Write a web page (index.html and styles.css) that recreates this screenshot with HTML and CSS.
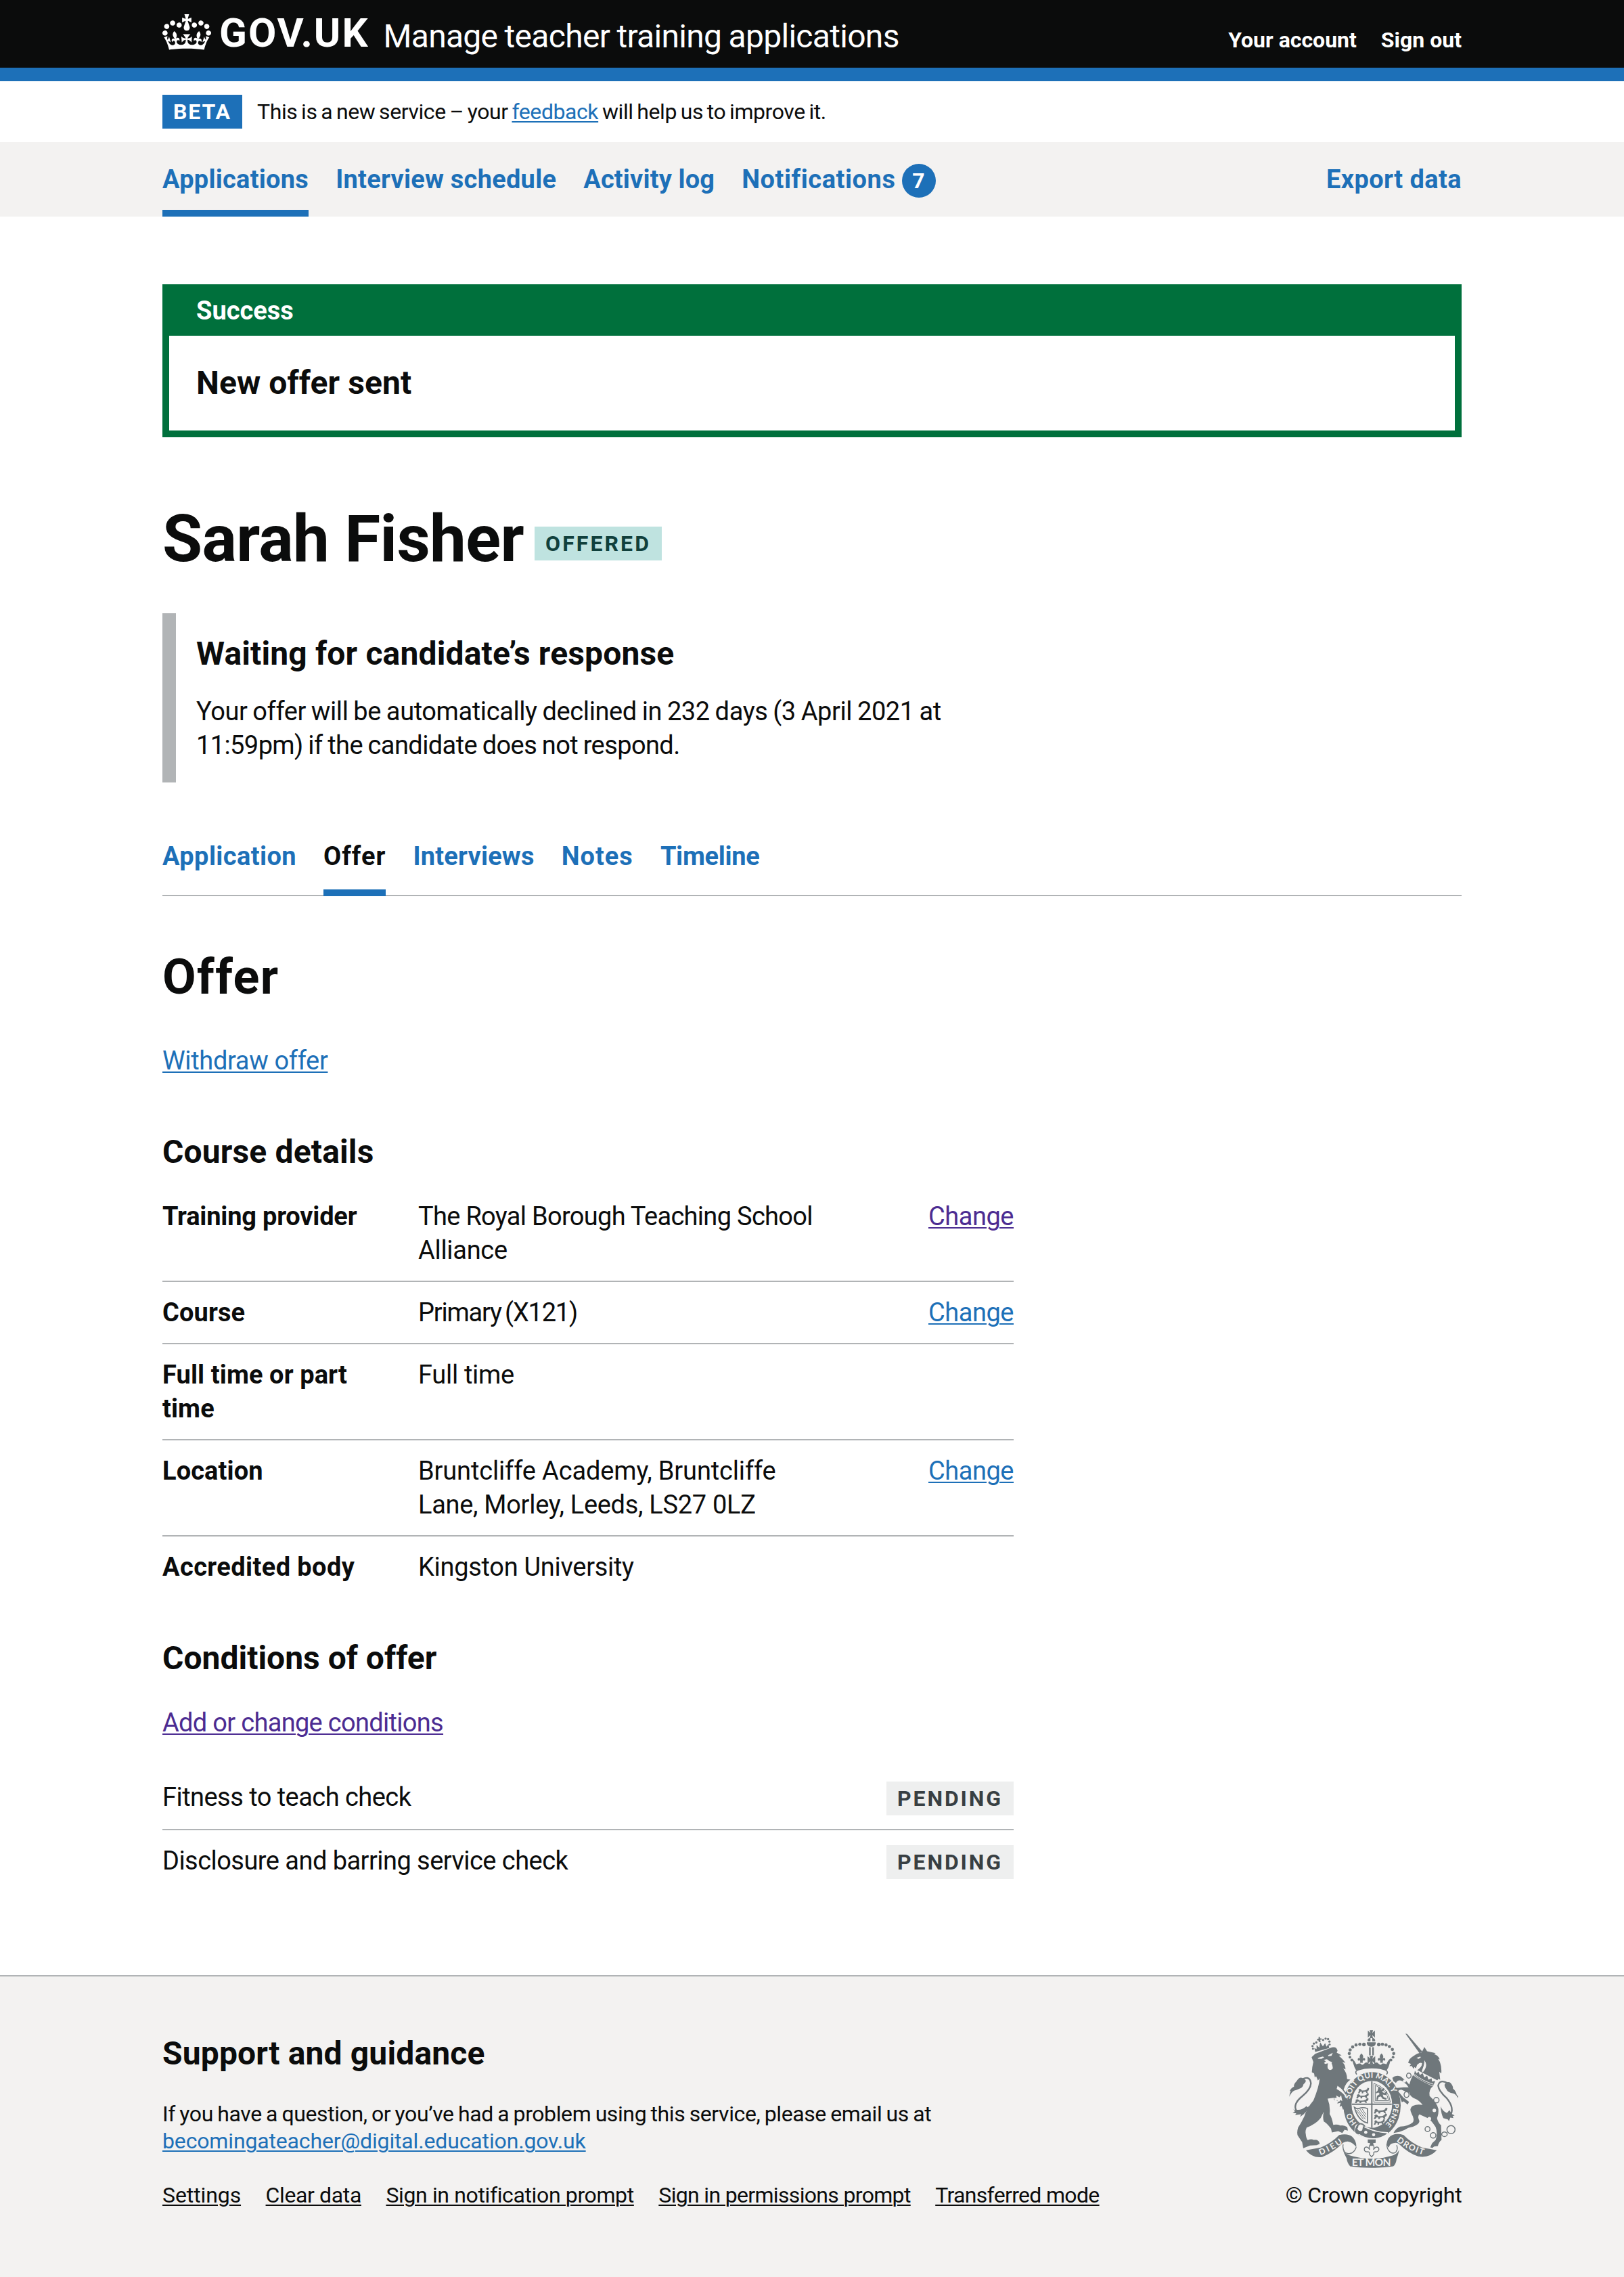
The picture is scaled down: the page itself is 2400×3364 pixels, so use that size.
FILE: index.html
```html
<!DOCTYPE html>
<html lang="en">
<head>
<meta charset="utf-8">
<title>Sarah Fisher - Manage teacher training applications - GOV.UK</title>
<link rel="stylesheet" href="styles.css">
</head>
<body>
<header class="header">
  <div class="container header-row">
    <a class="logo" href="#">
      <svg class="crown" viewBox="0 0 132 97" aria-hidden="true"><path fill="currentColor" fill-rule="evenodd" d="M25 30.2c3.5 1.5 7.7-.2 9.1-3.7 1.5-3.6-.2-7.8-3.9-9.2-3.6-1.4-7.6.3-9.1 3.9-1.4 3.5.3 7.5 3.9 9zM9 39.5c3.6 1.5 7.8-.2 9.2-3.7 1.5-3.6-.2-7.8-3.9-9.1-3.6-1.5-7.6.2-9.1 3.8-1.4 3.5.3 7.5 3.8 9zM4.4 57.2c3.5 1.5 7.7-.2 9.1-3.8 1.5-3.6-.2-7.7-3.9-9.1-3.5-1.5-7.6.3-9.1 3.8-1.4 3.5.3 7.6 3.9 9.1zm38.3-21.4c3.5 1.5 7.7-.2 9.1-3.8 1.5-3.6-.2-7.7-3.9-9.1-3.6-1.5-7.6.3-9.1 3.8-1.3 3.6.4 7.7 3.9 9.1zm64.4-5.6c-3.6 1.5-7.8-.2-9.1-3.7-1.5-3.6.2-7.8 3.8-9.2 3.6-1.4 7.7.3 9.2 3.9 1.3 3.5-.4 7.5-3.9 9zm15.9 9.3c-3.6 1.5-7.7-.2-9.1-3.7-1.5-3.6.2-7.8 3.7-9.1 3.6-1.5 7.7.2 9.2 3.8 1.5 3.5-.3 7.5-3.8 9zm4.7 17.7c-3.6 1.5-7.8-.2-9.2-3.8-1.5-3.6.2-7.7 3.9-9.1 3.6-1.5 7.7.3 9.2 3.8 1.3 3.5-.4 7.6-3.9 9.1zM89.3 35.8c-3.6 1.5-7.8-.2-9.2-3.8-1.4-3.6.2-7.7 3.9-9.1 3.6-1.5 7.7.3 9.2 3.8 1.4 3.6-.3 7.7-3.9 9.1zM69.7 17.7l8.9 4.7V9.3l-8.9 2.8c-.2-.3-.5-.6-.9-.9L72.4 0H59.6l3.5 11.2c-.3.3-.6.5-.9.9l-8.8-2.8v13.1l8.8-4.7c.3.3.6.7.9.9l-5 15.4v.1c-.2.8-.4 1.6-.4 2.4 0 4.1 3.1 7.5 7 8.1h.2c.3 0 .7.1 1 .1.4 0 .7 0 1-.1h.2c4-.6 7.1-4.1 7.1-8.1 0-.8-.1-1.7-.4-2.4V34l-5.1-15.4c.4-.2.7-.6 1-.9zM66 92.8c16.9 0 32.8 1.1 47.1 3.2 4-16.9 8.9-26.7 14-33.5l-9.6-3.4c1 4.9 1.1 7.2 0 10.2-1.5-1.4-3-4.3-4.2-8.7L108.6 76c2.8-2 5-3.2 7.5-3.3-4.4 9.4-10 11.9-13.6 11.2-4.3-.8-6.3-4.6-5.6-7.9 1-4.7 5.7-5.9 8-.5 4.3-8.7-3-11.4-7.6-8.8 7.1-7.2 7.9-13.5 2.1-21.1-8 6.1-8.1 12.3-4.5 20.8-4.7-5.4-12.1-2.5-9.5 6.2 3.4-5.2 7.9-2 7.2 3.1-.6 4.3-6.4 7.8-13.5 7.2-10.3-.9-10.9-8-11.2-13.8 2.5-.5 7.1 1.8 11 7.3L80.2 60c-4.1 4.4-8 5.3-12.3 5.4 1.4-4.4 8-11.6 8-11.6H55.5s6.4 7.2 7.9 11.6c-4.2-.1-8-1-12.3-5.4l1.4 16.4c3.9-5.5 8.5-7.7 10.9-7.3-.3 5.8-.9 12.8-11.1 13.8-7.2.6-12.9-2.9-13.5-7.2-.7-5 3.8-8.3 7.1-3.1 2.7-8.7-4.6-11.6-9.4-6.2 3.7-8.5 3.6-14.7-4.6-20.8-5.8 7.6-5 13.9 2.2 21.1-4.7-2.6-11.9.1-7.7 8.8 2.3-5.5 7.1-4.2 8.1.5.7 3.3-1.3 7.1-5.7 7.9-3.5.7-9-1.8-13.5-11.2 2.5.1 4.7 1.3 7.5 3.3l-4.7-15.4c-1.2 4.4-2.7 7.2-4.3 8.7-1.1-3-.9-5.3 0-10.2l-9.5 3.4c5 6.9 9.9 16.7 14 33.5 14.8-2.1 30.8-3.2 47.7-3.2z"/></svg>
      <span class="logotype">GOV.UK</span>
    </a>
    <a class="service-name" href="#">Manage teacher training applications</a>
    <nav class="account-nav"><a href="#">Your account</a><a href="#">Sign out</a></nav>
  </div>
</header>

<div class="container phase">
  <strong class="tag tag-beta">BETA</strong>
  <span class="phase-text">This is a new service – your <a class="link" href="#">feedback</a> will help us to improve it.</span>
</div>

<nav class="primary">
  <div class="container primary-row">
    <a class="primary-item current" href="#">Applications</a>
    <a class="primary-item" href="#">Interview schedule</a>
    <a class="primary-item" href="#">Activity log</a>
    <a class="primary-item" href="#">Notifications</a>
    <span class="count">7</span>
    <a class="primary-item export" href="#">Export data</a>
  </div>
</nav>

<main class="container main">
  <section class="banner">
    <h2 class="banner-title">Success</h2>
    <p class="banner-text">New offer sent</p>
  </section>

  <div class="title-row">
    <h1 class="title">Sarah Fisher</h1>
    <strong class="tag tag-offered">OFFERED</strong>
  </div>

  <section class="inset">
    <h2 class="heading-m">Waiting for candidate’s response</h2>
    <p class="inset-text"><span class="line line-a">Your offer will be automatically declined in 232 days (3 April 2021 at</span> <span class="line line-b">11:59pm) if the candidate does not respond.</span></p>
  </section>

  <nav class="tabs">
    <a class="tab" href="#">Application</a>
    <a class="tab selected" href="#">Offer</a>
    <a class="tab" href="#">Interviews</a>
    <a class="tab" href="#">Notes</a>
    <a class="tab" href="#">Timeline</a>
  </nav>

  <div class="two-thirds">
    <h2 class="heading-l">Offer</h2>
    <p class="withdraw"><a class="link" href="#">Withdraw offer</a></p>

    <h3 class="heading-m course-heading">Course details</h3>
    <dl class="summary">
      <div class="summary-row">
        <dt class="tight">Training provider</dt>
        <dd><span class="line school">The Royal Borough Teaching School</span> <span class="line">Alliance</span></dd>
        <dd class="action"><a class="link visited" href="#">Change</a></dd>
      </div>
      <div class="summary-row">
        <dt>Course</dt>
        <dd class="course-name">Primary (X121)</dd>
        <dd class="action"><a class="link" href="#">Change</a></dd>
      </div>
      <div class="summary-row">
        <dt>Full time or part time</dt>
        <dd>Full time</dd>
      </div>
      <div class="summary-row">
        <dt>Location</dt>
        <dd><span class="line academy">Bruntcliffe Academy, Bruntcliffe</span> <span class="line">Lane, Morley, Leeds, LS27 0LZ</span></dd>
        <dd class="action"><a class="link" href="#">Change</a></dd>
      </div>
      <div class="summary-row">
        <dt class="loose">Accredited body</dt>
        <dd>Kingston University</dd>
      </div>
    </dl>

    <h3 class="heading-m conditions-heading">Conditions of offer</h3>
    <p class="conditions-link"><a class="link visited" href="#">Add or change conditions</a></p>
    <ul class="conditions">
      <li><span>Fitness to teach check</span><strong class="tag tag-pending">PENDING</strong></li>
      <li><span>Disclosure and barring service check</span><strong class="tag tag-pending">PENDING</strong></li>
    </ul>
  </div>
</main>

<footer class="footer">
  <div class="container footer-row">
    <div class="support">
      <h2 class="heading-m">Support and guidance</h2>
      <p class="support-text"><span class="line question">If you have a question, or you’ve had a problem using this service, please email us at</span> <a class="link email" href="#">becomingateacher@digital.education.gov.uk</a></p>
      <nav class="footer-links">
        <a href="#">Settings</a>
        <a href="#">Clear data</a>
        <a href="#">Sign in notification prompt</a>
        <a href="#">Sign in permissions prompt</a>
        <a href="#">Transferred mode</a>
      </nav>
    </div>
    <div class="copyright">
      <svg class="crest" viewBox="72 58 750 614" aria-hidden="true">
        <defs>
          <path id="garter-top" d="M342 380A97 110 0 0 1 536 380"/>
          <path id="garter-left" d="M382 479A97 110 0 0 1 342 388"/>
          <path id="garter-right" d="M535 384A97 110 0 0 1 492 482"/>
          <path id="scroll-left" d="M211 613Q268 592 318 552"/>
          <path id="scroll-right" d="M548 550Q600 594 676 613"/>
          <g id="lion-passant"><path d="M0 5l6-5 5 3 4 5 14-1 8-4 4-8 6 3-2 9-6 4 2 9-6-1-3-6-10 1-2 7-6-1 1-7-7 0-4 8-6-1 4-11z"/></g>
          <g id="fleur"><path d="M0-20c8 8 9 14 4 23 3-7 12-6 11 2-1 5-7 5-8 1-2 5-3 7-1 11H-6c2-4 1-6-1-11-1 4-7 4-8-1-1-8 8-9 11-2-5-9-4-15 4-23z"/></g>
          <g id="cross"><path d="M-17-17Q-8-10-4-5L-8-19H8L4-5Q8-10 17-17V17Q10 9 4 5L8 19H-8L-4 5Q-10 9-17 17z"/></g>
        </defs>
        <g fill="currentColor">
          <!-- royal crown -->
          <use href="#cross" transform="translate(437 76) scale(.92)"/>
          <path d="M421 108q-4-14 12-15v15zM441 93q14 2 13 15h-13zM417 112h39v7q-4 13-19 13t-20-13zM427 134h7v36h-7zM441 134h7v36h-7z"/>
          <circle cx="404" cy="122" r="8"/><circle cx="386" cy="121" r="7"/><circle cx="369" cy="124" r="7"/><circle cx="354" cy="133" r="7"/><circle cx="343" cy="146" r="7"/><circle cx="339" cy="162" r="7"/><circle cx="342" cy="178" r="6"/><circle cx="350" cy="191" r="6"/>
          <circle cx="470" cy="122" r="8"/><circle cx="486" cy="121" r="7"/><circle cx="502" cy="124" r="7"/><circle cx="517" cy="131" r="7"/><circle cx="530" cy="144" r="7"/><circle cx="536" cy="162" r="7"/><circle cx="533" cy="178" r="6"/><circle cx="524" cy="191" r="6"/>
          <path d="M352 184q11 10 18 26 18-7 21-2 4 8 13 0 10-12 20-2 13 7 26 0 10-10 20 2 9 8 13 0 3-5 21 2 5-18 18-26-4 35-17 52-67-22-136 0-13-22-17-52z"/>
          <use href="#fleur" transform="translate(393 184) scale(1.1)"/><use href="#fleur" transform="translate(482 184) scale(1.1)"/><use href="#cross" transform="translate(437 191)"/>
          <path fill="none" stroke="currentColor" stroke-width="5" d="M372 255q-10-14 4-20 62-20 124 0 14 8 4 20"/>
          <!-- garter -->
          <path fill-rule="evenodd" d="M313 392A127 148 0 1 1 567 392A127 148 0 1 1 313 392zM349 387A90 104 0 1 0 529 387A90 104 0 1 0 349 387z"/>
          <path fill="none" stroke="currentColor" stroke-width="6" d="M439 285v206M350 387h177"/>
          <path fill="none" stroke="currentColor" stroke-width="3" d="M448 294v84h73q-5-60-73-84zM455 303v68h58q-5-45-58-68z"/>
          <use href="#lion-passant" transform="translate(380 318)"/><use href="#lion-passant" transform="translate(372 342) scale(1.15 .9)"/><use href="#lion-passant" transform="translate(366 364) scale(1.25 .85)"/>
          <use href="#lion-passant" transform="translate(450 407) scale(1.25 1)"/><use href="#lion-passant" transform="translate(450 432) scale(1.2 1)"/><use href="#lion-passant" transform="translate(450 457)"/>
          <path d="M469 309l9 5 2 10 12-9 3 6-11 11 12 6 9-10 3 6-7 12-14-2 4 11 14 5-2 7-16-4-8-11-10 3-4 14-6-3 3-16 12-8-6-8-9 5-2-5 8-8z"/>
          <path fill="none" stroke="currentColor" stroke-width="5" d="M362 401q13 9 22 4 14-7 36 1v64q-42-10-58-69z"/>
          <path fill="none" stroke="currentColor" stroke-width="3" d="M376 410l35 44M386 408l27 37M396 407l17 26M369 412l33 42"/>
          <path stroke="#f3f2f1" stroke-width="5" d="M366 487q5-14 22-10 57 34 120 36l-2 8q-28 19-62 19-37 0-63-20-17-3-17-16z"/>
          <circle cx="388" cy="492" r="13" fill="#f3f2f1"/><path fill="none" stroke="currentColor" stroke-width="6" d="M378 517q-17-7-9-23 10-5 6-14 16-15 31 2-6 8-6 18 0 17-22 17z"/>
          <circle cx="412" cy="511" r="7" fill="#f3f2f1"/><circle cx="447" cy="522" r="7" fill="#f3f2f1"/>
          <!-- pendant -->
          <path d="M421 543h35v15l-11 1v12h-14v-12l-10-1z"/>
          <path fill="none" stroke="currentColor" stroke-width="4" d="M438 560q-16 12-8 28-12-18-23-8-5 16 10 18 10-2 12 4-3 8 4 12l5 6 5-6q7-4 4-12 2-6 12-4 15-4 10-18-11-10-23 8 8-16-8-28z"/>
          <!-- lion -->
          <path d="M188 155L184 138L194 142L194 124L206 136L210 112L222 130L232 116L238 132L247 120L250 138z"/>
          <path d="M203 88h6v7h7v6h-6l2 10h-8l-2-8-6 1v-6l7-2z"/>
          <circle cx="178" cy="141" r="4.500"/><circle cx="176" cy="129" r="5"/><circle cx="182" cy="118" r="5"/><circle cx="193" cy="113" r="5"/><circle cx="223" cy="102" r="5"/><circle cx="234" cy="96" r="5"/><circle cx="245" cy="98" r="5"/><circle cx="251" cy="109" r="5"/><circle cx="252" cy="122" r="4.500"/>
          <path d="M172 178L188 163L262 135Q283 130 287 150L283 158L305 170L293 172Q306 182 322 203L308 200Q322 212 322 232L312 228Q330 250 329 275L344 278Q322 292 314 322Q330 345 348 360L348 405L330 417L318 402L312 412L305 394L296 398L301 380L286 384L290 372L272 368L270 358L243 362Q256 395 252 430Q262 445 268 478Q284 474 300 481Q316 478 330 488L333 504L318 500L308 514L290 506L262 512L258 495Q242 472 226 463Q220 445 226 420L212 448Q190 475 150 490Q143 505 146 518Q148 540 155 546Q170 538 182 545Q204 542 208 562L195 568L165 570L135 582L130 555L110 525Q106 510 112 490Q126 470 140 440Q150 405 180 370Q205 310 208 272L200 282L192 262L186 268L183 250L173 245Q174 220 180 200z"/>
          <path fill="#f3f2f1" d="M200 181l22-6 6 4-13 7-15-1zM246 169l20-10-6 13-15 2zM226 190l14-3 12 9 12 4-4 4q8 15 5 26-12 10-20 0-5-12 0-25l-13 3-5-4 8-7zM287 305q34 22 46 63-18-32-50-49zM271 359l12-1-2-10 14 8 8-9 5 26-8-5-7 10-7-9-10 2z"/>
          <!-- lion tail -->
          <path fill="none" stroke="currentColor" stroke-width="7" d="M118 284Q164 252 169 294Q168 320 132 350Q88 385 104 414Q125 420 152 398"/>
          <path d="M73 354q2-19 7-25l-5-1q8-15 19-19-3-10 12-25 12-20 26-13 26 9 4 27-3 15-16 19-14 7-26 10-13 8-21 27z"/>
          <path d="M88 404Q96 416 110 413Q135 416 162 394Q152 424 120 443L126 431L99 435L104 427L88 424L98 418z"/>
          <!-- unicorn -->
          <path d="M588 74l7 1 69 80-14 5z"/>
          <path d="M600 203Q605 182 625 172Q640 160 660 157L672 133L684 152L722 160L715 165Q735 172 740 188L733 186Q750 210 747 250L738 243L742 278L734 274Q730 283 722 286Q670 262 636 238Q660 225 662 206Q655 198 640 212L634 228L628 222L624 230L616 217L606 218L613 208z"/>
          <path fill="#f3f2f1" d="M637 181l17-6 2 5-10 6zM672 192q18 24-6 52l-6-3 8-22q4-14 4-27z"/>
          <path d="M624 252Q665 285 712 305Q690 322 695 350Q728 380 734 408Q736 430 728 448Q732 468 746 480L748 545Q735 555 732 572L715 574L708 580L698 578L706 560L722 545Q732 515 722 488Q705 462 690 450Q668 440 650 432Q640 440 650 462Q648 482 600 492Q580 505 560 510L535 514Q546 493 565 486Q600 485 620 468Q630 455 616 430Q602 405 620 394Q640 385 664 390Q650 370 630 362Q610 355 605 335Q585 330 570 322Q558 322 556 330L578 356L604 376L598 388L580 374L572 378L562 350L545 328L528 330L532 316L580 312L602 312L592 298L575 285Q555 275 546 292L535 285L530 270Q545 256 567 264L592 285L605 300Q612 275 624 252z"/>
          <path fill="#f3f2f1" d="M630 230L740 286L716 310Q665 290 620 257z"/>
          <path d="M630 238L638 250L646 242L652 258L664 249L672 268L684 260L690 278L704 272L706 286L720 284L711 305Q665 290 626 257z"/>
          <path fill="none" stroke="#f3f2f1" stroke-width="3" d="M628 254Q665 284 712 298"/>
          <!-- unicorn tail -->
          <path fill="none" stroke="currentColor" stroke-width="7" d="M777 294Q740 274 733 304Q735 328 772 361Q808 405 785 440L757 425"/>
          <path d="M822 360Q811 342 800 339Q775 335 769 319Q756 303 765 294Q778 284 788 292Q800 306 799 318Q812 328 816 348L822 349zM744 396Q752 418 772 426L783 413L794 430L806 436L797 440L801 448L787 446L781 462L776 454L756 448Q746 430 744 396z"/>
          <!-- chain -->
          <g fill="none" stroke="currentColor" stroke-width="4.500"><ellipse cx="603" cy="260" rx="10" ry="11"/><ellipse cx="593" cy="344" rx="11" ry="13"/><circle cx="725" cy="369" r="12"/><circle cx="686" cy="497" r="11"/><circle cx="711" cy="525" r="12"/><ellipse cx="761" cy="520" rx="12" ry="10"/><circle cx="790" cy="499" r="18"/></g>
          <g fill="#f3f2f1"><circle cx="716" cy="414" r="8"/><circle cx="694" cy="451" r="8"/><circle cx="584" cy="284" r="7"/></g>
          <!-- motto scroll -->
          <path d="M147 591l65-12q50-22 82-56 40-8 58 8 20 20 18 46-14-20-32-24-10-4-27 5-40 42-92 63-44 6-72-30zM727 591l-65-12q-50-22-82-56-28-8-50 0-20 8-25 36 0 14 10 20 1-17 20-20 17-4 24 4 44 42 85 55 48 10 83-27z"/>
          <path fill="none" stroke="currentColor" stroke-width="4" d="M370 577q-10 26-28 28-14 3-24-8-10-14-6-32M506 562q-2 26 16 38 14 8 24-2 10-12 3-30"/>
          <path d="M310 587q10 20 30 26 98 30 194 0 20-8 27-26-5 24-12 42-3 24-15 33-98 14-191 0-13-14-16-36-11-19-17-39z"/>
        </g>
        <g fill="#f3f2f1" class="motto">
          <text font-size="35"><textPath href="#garter-top" startOffset="16" textLength="266">SOIT QUI MAL Y</textPath></text>
          <text font-size="33"><textPath href="#garter-left" startOffset="14">HO</textPath></text>
          <text font-size="32"><textPath href="#garter-right" textLength="102">PENSE</textPath></text>
          <text font-size="37"><textPath href="#scroll-left" textLength="114">DIEU</textPath></text>
          <text font-size="37"><textPath href="#scroll-right" textLength="134">DROIT</textPath></text>
          <text font-size="47" x="350" y="662" textLength="174">ET MON</text>
        </g>
      </svg>
      <span class="copyright-text">© Crown copyright</span>
    </div>
  </div>
</footer>
</body>
</html>
```
FILE: styles.css
```css
* { box-sizing: border-box; }
body {
  margin: 0;
  background: #fff;
  color: #0b0c0c;
  font: 400 38px/50px Roboto, "Liberation Sans", sans-serif;
  letter-spacing: -0.6px;
}
h1, h2, h3, p, ul, dl, dd { margin: 0; padding: 0; }
ul { list-style: none; }
a { color: inherit; text-decoration: none; }
.container { width: 1920px; margin: 0 auto; }
.link, .footer-links a {
  color: #1d70b8;
  text-decoration: underline;
  text-decoration-thickness: 2px;
  text-underline-offset: 3px;
}
.link.visited { color: #4c2c92; }
.line { display: block; white-space: nowrap; }

/* Header */
.header { background: #0b0c0c; border-bottom: 20px solid #1d70b8; color: #fff; height: 120px; }
.header-row { display: flex; align-items: flex-start; }
.logo { display: flex; align-items: flex-start; padding-top: 19px; }
.crown { width: 72px; height: 53px; margin-top: 2px; }
.logotype { margin-left: 12px; font-size: 60px; font-weight: 700; line-height: 60px; letter-spacing: 2px; }
.service-name { margin-left: 21px; padding-top: 24px; font-size: 48px; line-height: 60px; letter-spacing: -0.7px; word-spacing: -1px; }
.account-nav { display: flex; gap: 36px; margin-left: auto; padding-top: 39px; font-size: 32px; line-height: 40px; font-weight: 700; letter-spacing: 0; }

/* Tags */
.tag { display: block; height: 50px; padding: 0 16px; font-size: 32px; line-height: 50px; font-weight: 700; }
.tag-beta { background: #1d70b8; color: #fff; letter-spacing: 1.9px; }
.tag-offered { background: #bfe3e0; color: #10403c; letter-spacing: 3.07px; }
.tag-pending { background: #eeefef; color: #383f43; letter-spacing: 2.88px; margin-top: 2px; }

/* Phase banner */
.phase { display: flex; padding: 20px 0; }
.phase-text { margin: 5px 0 0 22px; font-size: 32px; line-height: 40px; letter-spacing: -0.42px; word-spacing: -1.8px; }

/* Primary navigation */
.primary { background: #f3f2f1; color: #1d70b8; font-weight: 700; }
.primary-row { display: flex; height: 110px; }
.primary-item { padding-top: 30px; margin-right: 40px; letter-spacing: 0.25px; }
.primary-item.current { border-bottom: 10px solid #1d70b8; }
.primary-item:nth-child(3) { letter-spacing: 0.15px; }
.primary-item:nth-child(4) { letter-spacing: 0.55px; margin-right: 9px; }
.primary-item.export { margin: 0 0 0 auto; letter-spacing: 0.4px; }
.count { width: 50px; height: 50px; margin-top: 32px; border-radius: 50%; background: #1d70b8; color: #fff; font-size: 32px; line-height: 50px; text-align: center; letter-spacing: 0; }

/* Success banner */
.main { padding-top: 100px; padding-bottom: 142px; }
.banner { border: 10px solid #00703c; border-top: 0; }
.banner-title { padding: 14px 40px 12px; background: #00703c; color: #fff; font-size: 38px; line-height: 50px; letter-spacing: 0; }
.banner-text { padding: 40px; font-size: 48px; line-height: 60px; font-weight: 700; letter-spacing: 0.1px; }

/* Page title */
.title-row { display: flex; margin-top: 100px; }
.title { font-size: 96px; line-height: 100px; letter-spacing: -0.6px; }
.tag-offered { margin: 32px 0 0 16px; }

.heading-m { font-size: 48px; line-height: 60px; letter-spacing: 0.15px; }
.heading-l { font-size: 72px; line-height: 78px; letter-spacing: 1.4px; }

/* Inset */
.inset { margin-top: 60px; padding: 30px; border-left: 20px solid #b1b4b6; }
.inset-text { margin-top: 30px; word-spacing: -1.2px; }
.line-a { letter-spacing: -0.4px; }
.line-b { letter-spacing: -0.6px; }

/* Tabs */
.tabs { display: flex; gap: 40px; height: 98px; margin-top: 70px; padding-top: 14px; border-bottom: 2px solid #b1b4b6; color: #1d70b8; font-weight: 700; }
.tab { height: 84px; letter-spacing: 0.4px; }
.tab:nth-child(2), .tab:nth-child(4) { letter-spacing: 1px; }
.tab:nth-child(3) { letter-spacing: 0.2px; }
.tab:nth-child(5) { letter-spacing: -0.3px; }
.tab.selected { color: #0b0c0c; border-bottom: 10px solid #1d70b8; }

/* Offer */
.two-thirds { width: 1258px; padding-top: 81px; }
.withdraw { margin-top: 59px; letter-spacing: -0.34px; }
.course-heading { margin-top: 80px; }
.summary { margin-top: 20px; }
.summary-row { display: grid; grid-template-columns: 378px 629px 251px; padding: 20px 0; border-bottom: 2px solid #b1b4b6; }
.summary-row:last-child { border-bottom: 0; }
.summary-row dt { width: 300px; font-weight: 700; letter-spacing: 0.1px; }
.summary-row dt.tight { letter-spacing: -0.2px; }
.summary-row dt.loose { letter-spacing: 0.4px; }
.summary-row dd { letter-spacing: -0.3px; }
.summary-row .school { letter-spacing: -0.7px; }
.summary-row .course-name { letter-spacing: -1.2px; word-spacing: -3px; }
.summary-row .academy { letter-spacing: -0.15px; }
.summary-row .action { text-align: right; letter-spacing: -0.47px; }

.conditions-heading { margin-top: 60px; letter-spacing: 0; }
.conditions-link { margin-top: 40px; letter-spacing: -0.69px; }
.conditions { margin-top: 40px; }
.conditions li { display: flex; justify-content: space-between; padding: 20px 0; border-bottom: 2px solid #b1b4b6; letter-spacing: -0.54px; }
.conditions li:last-child { border-bottom: 0; padding-bottom: 0; }

/* Footer */
.footer { height: 446px; background: #f3f2f1; border-top: 2px solid #b1b4b6; font-size: 32px; line-height: 40px; }
.footer-row { display: flex; justify-content: space-between; padding-top: 79px; }
.support { padding-top: 5px; }
.support-text { margin-top: 39px; }
.question { letter-spacing: -0.4px; word-spacing: -1.2px; }
.email { letter-spacing: -0.15px; }
.footer-links { display: flex; gap: 36.5px; margin-top: 40px; }
.footer-links a { color: #0b0c0c; letter-spacing: -0.1px; }
.footer-links a:nth-child(2), .footer-links a:nth-child(3) { letter-spacing: -0.37px; }
.footer-links a:nth-child(n+4) { letter-spacing: -0.67px; }
.copyright { display: flex; flex-direction: column; align-items: center; width: 260px; }
.crest { width: 250px; height: 205px; color: #6f777b; }
.copyright-text { margin-top: 19px; white-space: nowrap; letter-spacing: -0.25px; }
.motto { font-family: Lato, sans-serif; font-weight: 700; letter-spacing: 0; }
.tag-pending, .tag-offered { flex: none; }
```
